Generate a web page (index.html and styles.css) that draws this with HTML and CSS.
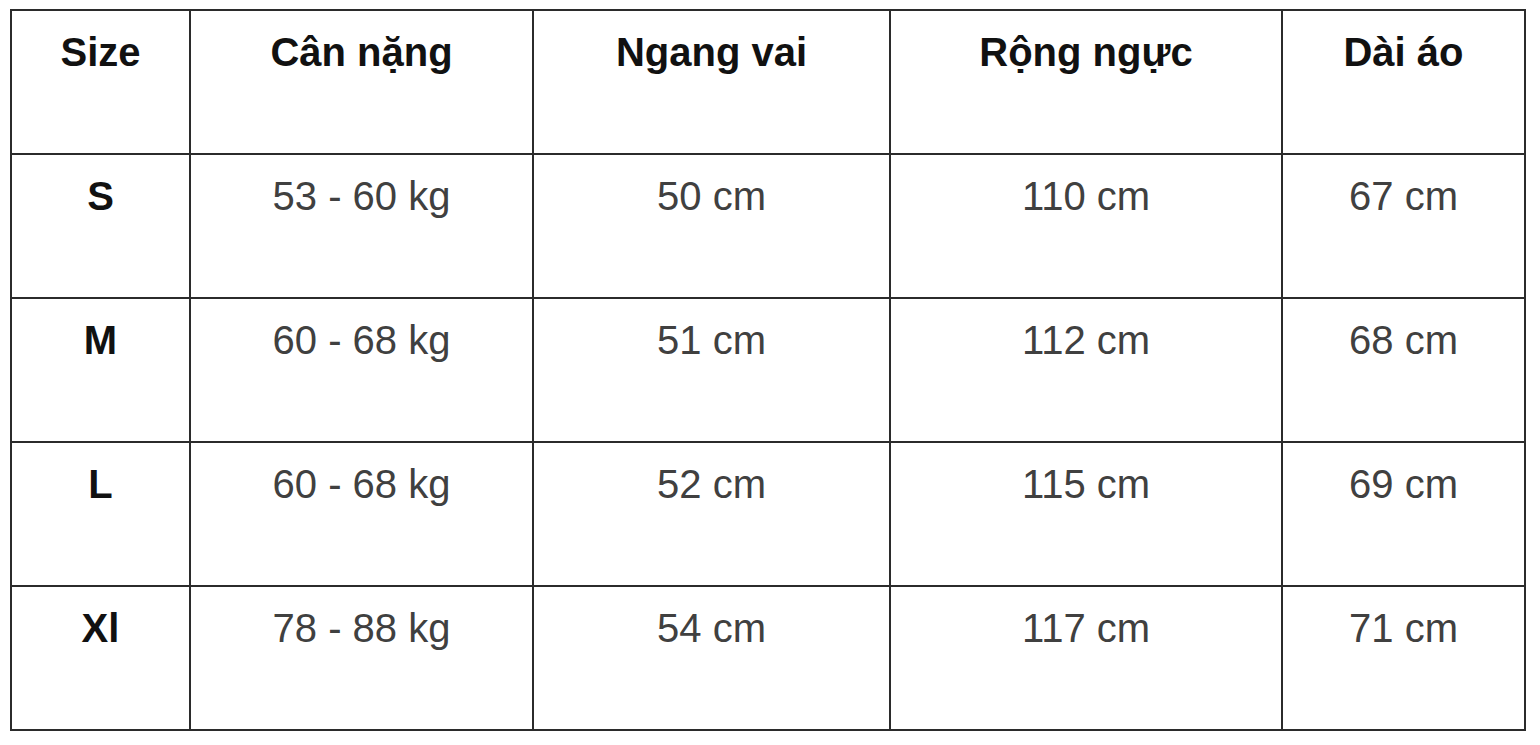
FILE: index.html
```html
<!DOCTYPE html>
<html lang="vi">
<head>
<meta charset="utf-8">
<title>Bảng size</title>
<link rel="stylesheet" href="styles.css">
</head>
<body>
<table class="size-table">
  <colgroup>
    <col class="c1"><col class="c2"><col class="c3"><col class="c4"><col class="c5">
  </colgroup>
  <thead>
    <tr>
      <th>Size</th>
      <th>Cân nặng</th>
      <th>Ngang vai</th>
      <th>Rộng ngực</th>
      <th>Dài áo</th>
    </tr>
  </thead>
  <tbody>
    <tr><th>S</th><td>53 - 60 kg</td><td>50 cm</td><td>110 cm</td><td>67 cm</td></tr>
    <tr><th>M</th><td>60 - 68 kg</td><td>51 cm</td><td>112 cm</td><td>68 cm</td></tr>
    <tr><th>L</th><td>60 - 68 kg</td><td>52 cm</td><td>115 cm</td><td>69 cm</td></tr>
    <tr><th>Xl</th><td>78 - 88 kg</td><td>54 cm</td><td>117 cm</td><td>71 cm</td></tr>
  </tbody>
</table>
</body>
</html>
```

FILE: styles.css
```css
html, body {
  margin: 0;
  padding: 0;
  background: #ffffff;
}

body {
  font-family: "Liberation Sans", Arial, sans-serif;
}

.size-table {
  margin: 9px 0 0 10px;
  border-collapse: collapse;
  table-layout: fixed;
  width: 1516px;
}

.c1 { width: 179px; }
.c2 { width: 343px; }
.c3 { width: 357px; }
.c4 { width: 392px; }
.c5 { width: 243px; }

.size-table tr {
  height: 144px;
}

.size-table th,
.size-table td {
  border: 2px solid #2b2b2b;
  text-align: center;
  vertical-align: top;
  padding: 19px 4px 0;
  font-size: 40px;
  line-height: 45px;
}

.size-table th {
  font-weight: bold;
  color: #111111;
}

.size-table td {
  font-weight: normal;
  color: #404040;
}
```
